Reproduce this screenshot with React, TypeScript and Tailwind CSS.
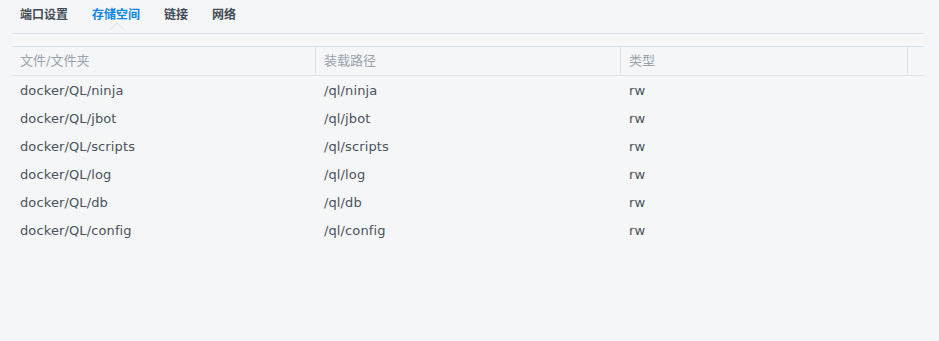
import React from "react";

const rows = [
  ["docker/QL/ninja", "/ql/ninja", "rw"],
  ["docker/QL/jbot", "/ql/jbot", "rw"],
  ["docker/QL/scripts", "/ql/scripts", "rw"],
  ["docker/QL/log", "/ql/log", "rw"],
  ["docker/QL/db", "/ql/db", "rw"],
  ["docker/QL/config", "/ql/config", "rw"],
];

export default function App() {
  return (
    <div
      className="w-[939px] h-[341px] bg-[#f5f6f8] pl-[12px] pr-[15px]"
      style={{ fontFamily: '"DejaVu Sans", "Noto Sans CJK SC", sans-serif' }}
    >
      <div className="relative flex h-[34px] border-b border-[#dbe1e8] pl-[8px] gap-[24px] text-[12px] font-bold">
        <div className="pt-[5px] leading-[20px] text-[#414b55]">端口设置</div>
        <div className="relative pt-[5px] leading-[20px] text-[#0a84e6]">
          存储空间
          <svg
            className="absolute left-[18px] top-[22px]"
            width="14"
            height="8"
            viewBox="0 0 14 8"
          >
            <path d="M0 7.5 L7 1 L14 7.5" fill="#f5f6f8" stroke="#dbe1e8" strokeWidth="1" />
          </svg>
        </div>
        <div className="pt-[5px] leading-[20px] text-[#414b55]">链接</div>
        <div className="pt-[5px] leading-[20px] text-[#414b55]">网络</div>
      </div>
      <div className="mt-[12px] border-t border-[#d3e2f0]">
        <div className="flex h-[29px] border-b border-[#dde4ea] text-[13px] text-[#9aa3ab] items-center">
          <div className="w-[303px] pl-[8px]">文件/文件夹</div>
          <div className="w-[305px] h-full border-l border-[#dde4ea] pl-[8px] flex items-center">装载路径</div>
          <div className="w-[287px] h-full border-l border-[#dde4ea] pl-[8px] flex items-center">类型</div>
          <div className="flex-1 h-full border-l border-[#dde4ea]"></div>
        </div>
        {rows.map((r) => (
          <div key={r[0]} className="flex h-[28px] pt-[1px] items-center text-[13px] tracking-[0.12px] text-[#4a525b]">
            <div className="w-[303px] pl-[8px]">{r[0]}</div>
            <div className="w-[305px] pl-[9px]">{r[1]}</div>
            <div className="w-[287px] pl-[9px]">{r[2]}</div>
          </div>
        ))}
      </div>
    </div>
  );
}
